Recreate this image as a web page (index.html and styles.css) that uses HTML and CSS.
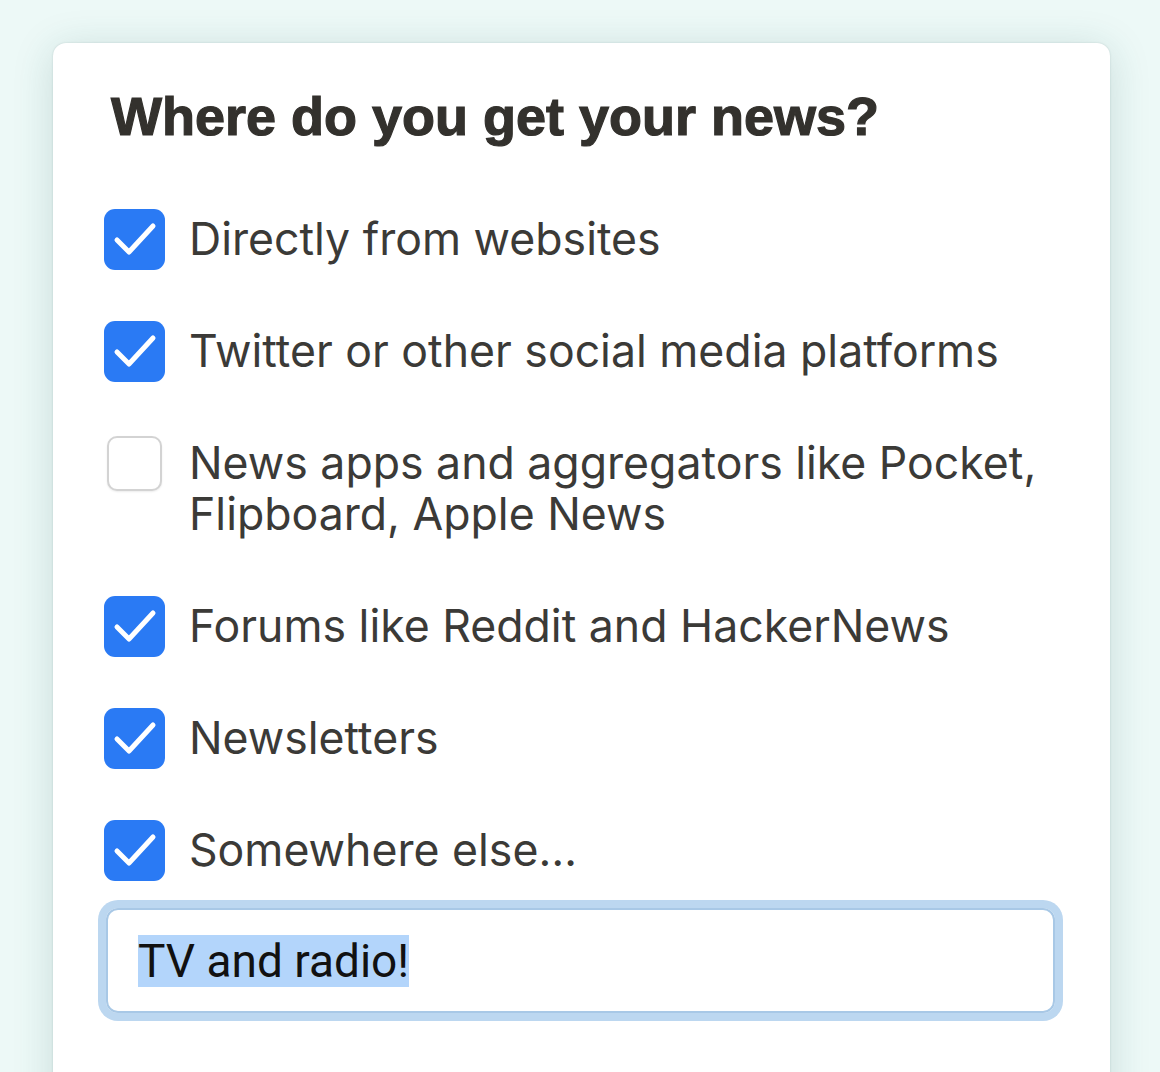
FILE: index.html
```html
<!DOCTYPE html>
<html lang="en">
<head>
<meta charset="utf-8">
<title>Where do you get your news?</title>
<link rel="stylesheet" href="styles.css">
</head>
<body>
<main class="card">
  <h1 class="title">Where do you get your news?</h1>
  <ul class="options">
    <li class="option">
      <span class="box checked"><svg viewBox="0 0 61 61" aria-hidden="true"><path d="M13 31 L25 43 L49 17"/></svg></span>
      <span class="label">Directly from websites</span>
    </li>
    <li class="option">
      <span class="box checked"><svg viewBox="0 0 61 61" aria-hidden="true"><path d="M13 31 L25 43 L49 17"/></svg></span>
      <span class="label">Twitter or other social media platforms</span>
    </li>
    <li class="option">
      <span class="box"><span class="empty"></span></span>
      <span class="label">News apps and aggregators like Pocket, Flipboard, Apple News</span>
    </li>
    <li class="option">
      <span class="box checked"><svg viewBox="0 0 61 61" aria-hidden="true"><path d="M13 31 L25 43 L49 17"/></svg></span>
      <span class="label">Forums like Reddit and HackerNews</span>
    </li>
    <li class="option">
      <span class="box checked"><svg viewBox="0 0 61 61" aria-hidden="true"><path d="M13 31 L25 43 L49 17"/></svg></span>
      <span class="label">Newsletters</span>
    </li>
    <li class="option">
      <span class="box checked"><svg viewBox="0 0 61 61" aria-hidden="true"><path d="M13 31 L25 43 L49 17"/></svg></span>
      <span class="label">Somewhere else…</span>
    </li>
  </ul>
  <div class="field" role="textbox"><span class="selected">TV and radio!</span></div>
</main>
</body>
</html>
```
FILE: styles.css
```css
html {
  overflow: hidden;
}
body {
  margin: 0;
  padding: 43px 50px 0 53px;
  background: #edf9f7;
  font-family: "Inter", "Liberation Sans", sans-serif;
}
.card {
  width: 1057px;
  box-sizing: border-box;
  min-height: 1100px;
  background: #ffffff;
  border-radius: 13px;
  box-shadow: 0 0 2px rgba(40, 80, 80, 0.2), 0 6px 40px rgba(30, 90, 90, 0.18);
  padding: 46px 55px 60px 51px;
}
.title {
  margin: 0 0 66px 7px;
  font-family: "Liberation Sans", Arial, sans-serif;
  font-weight: 700;
  font-size: 54px;
  line-height: 54px;
  color: #33312d;
  -webkit-text-stroke: 1.2px #33312d;
}
.options {
  list-style: none;
  margin: 0;
  padding: 0;
  display: flex;
  flex-direction: column;
  gap: 51px;
}
.option {
  display: flex;
  align-items: flex-start;
  gap: 24px;
}
.box {
  flex: 0 0 61px;
  width: 61px;
  height: 61px;
  display: flex;
  align-items: center;
  justify-content: center;
  box-sizing: border-box;
}
.box.checked {
  background: #2a7af4;
  border-radius: 11px;
}
.box svg {
  width: 61px;
  height: 61px;
  display: block;
}
.box svg path {
  fill: none;
  stroke: #ffffff;
  stroke-width: 5;
  stroke-linecap: round;
  stroke-linejoin: round;
}
.empty {
  width: 55px;
  height: 55px;
  box-sizing: border-box;
  border: 2px solid #d3d3d3;
  border-radius: 10px;
  background: #ffffff;
  box-shadow: 0 1px 2px rgba(0, 0, 0, 0.08);
}
.label {
  padding: 5px 0;
  font-size: 44.6px;
  line-height: 51px;
  color: #3b3a37;
  font-weight: 400;
}
.field {
  margin: 27px 0 0 2px;
  height: 105px;
  box-sizing: border-box;
  border: 2px solid #a8c8e6;
  border-radius: 12px;
  box-shadow: 0 0 0 8px #bcd7f0;
  padding: 0 30px;
  display: flex;
  align-items: center;
  font-family: "Roboto", "Liberation Sans", sans-serif;
  font-size: 46px;
  line-height: 52px;
  color: #111111;
}
.selected {
  background: #b3d5fb;
}
```
